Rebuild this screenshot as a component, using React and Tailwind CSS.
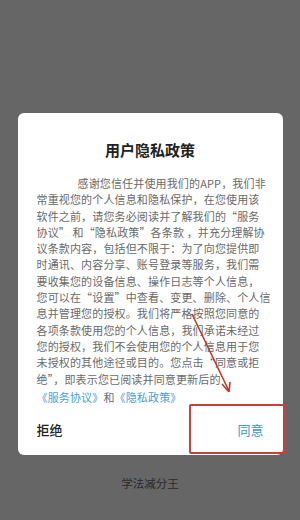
import React from 'react';

const lines = [
  '常重视您的个人信息和隐私保护，在您使用该',
  '软件之前，请您务必阅读并了解我们的“服务',
  '协议” 和“隐私政策”各条款 ，并充分理解协',
  '议条款内容，包括但不限于：为了向您提供即',
  '时通讯、内容分享、账号登录等服务，我们需',
  '要收集您的设备信息、操作日志等个人信息，',
  '您可以在“设置”中查看、变更、删除、个人信',
  '息并管理您的授权。我们将严格按照您同意的',
  '各项条款使用您的个人信息，我们承诺未经过',
  '您的授权，我们不会使用您的个人信息用于您',
  '未授权的其他途径或目的。您点击“同意或拒',
  '绝”，即表示您已阅读并同意更新后的',
];

const font = { fontFamily: '"Noto Sans CJK SC", "Noto Sans", sans-serif' };

const App = () => {
  return (
    <div className="relative flex h-[520px] w-[300px] flex-col items-center bg-[#666666]" style={font}>
      {/* dialog */}
      <div className="relative mt-[113px] w-[265px] rounded-[6px] bg-white px-[19px] pb-[16px] pt-[27px]">
        <div className="text-center text-[15px] font-bold leading-[20px] text-[#222]">用户隐私政策</div>
        <div className="mt-[15px] text-[11px] leading-[16.3px] tracking-[0.15px] text-[#6a6a6a]">
          <div className="whitespace-nowrap pl-[41px]">感谢您信任并使用我们的APP，我们非</div>
          {lines.map((l) => (
            <div key={l} className="whitespace-nowrap">{l}</div>
          ))}
          <div className="mt-[2px] whitespace-nowrap">
            <span className="text-[#4a9ed8]">《服务协议》</span>
            <span>和</span>
            <span className="text-[#4a9ed8]">《隐私政策》</span>
          </div>
        </div>
        <div className="mt-[16px] flex items-center justify-between text-[13px] leading-[18px]">
          <span className="font-medium text-[#222]">拒绝</span>
          <span className="text-[#3d96d4]">同意</span>
        </div>
        {/* annotation box */}
        <div className="absolute right-[-3px] top-[291px] h-[50px] w-[97px] rounded-[2px] border-2 border-[#c9403b]" />
      </div>

      <div className="mt-[20px] text-[11.5px] leading-[16px] text-[#2a2a2a]">学法减分王</div>

      {/* annotation arrow */}
      <svg className="absolute left-0 top-0" width="300" height="520" viewBox="0 0 300 520">
        <line x1="192" y1="314" x2="229" y2="391" stroke="#c0392b" strokeWidth="1.6" />
        <path d="M229 392 L222 384 M229 392 L230 382" stroke="#c0392b" strokeWidth="1.6" fill="none" />
      </svg>
    </div>
  );
};

export default App;
